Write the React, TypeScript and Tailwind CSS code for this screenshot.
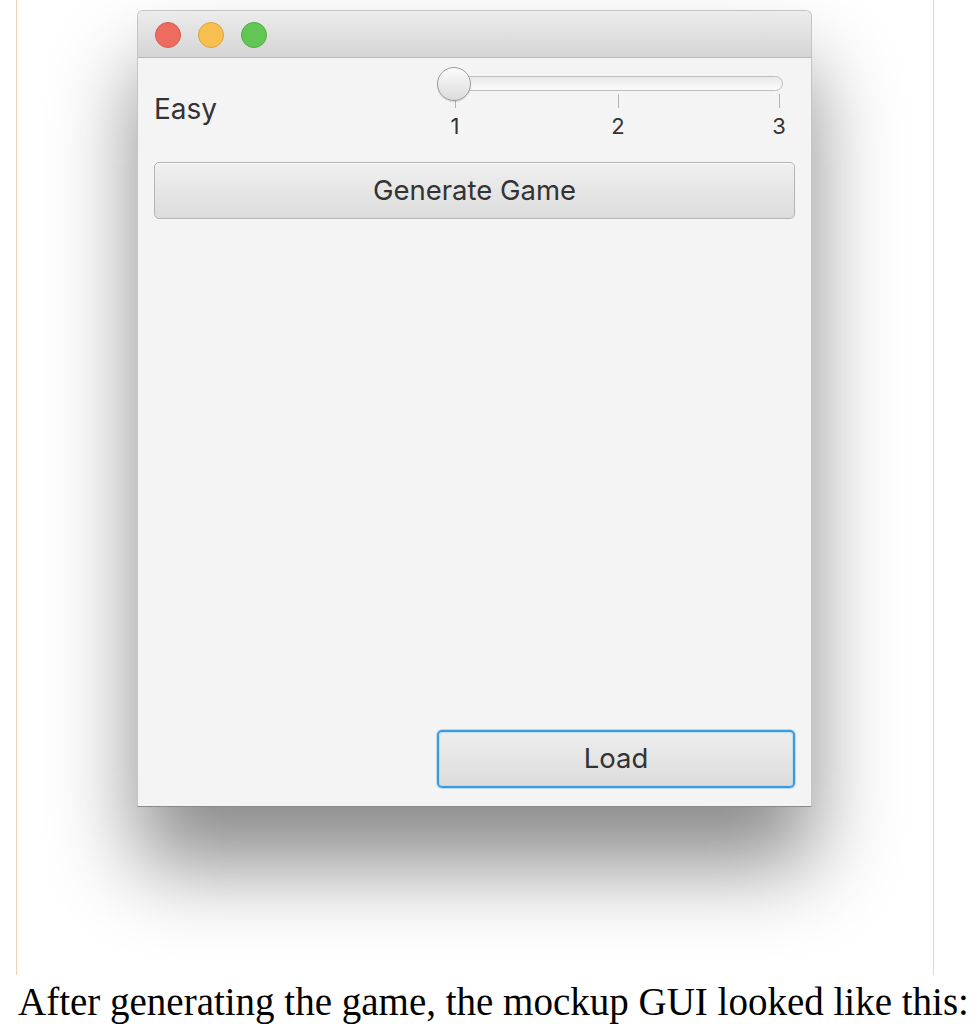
import React from "react";

const ticks = [
  { left: "left-[18px]", label: "1" },
  { left: "left-[181px]", label: "2" },
  { left: "left-[342px]", label: "3" },
];

function TrafficLights() {
  return (
    <div className="flex items-center gap-[17px] pl-[17px] pt-[11px]">
      <span className="w-[26px] h-[26px] rounded-full bg-[#ee6b5f] border border-[#d9594e]" />
      <span className="w-[26px] h-[26px] rounded-full bg-[#f6bf4f] border border-[#dca33c]" />
      <span className="w-[26px] h-[26px] rounded-full bg-[#62c655] border border-[#4eaa40]" />
    </div>
  );
}

function DifficultySlider() {
  return (
    <div className="relative w-[346px] h-[72px]">
      {/* track */}
      <div className="absolute left-[10px] right-0 top-[9px] h-[15px] rounded-full border border-[#bdbdbd] bg-gradient-to-b from-[#e9e9e9] to-[#fbfbfb]" />
      {/* ticks + labels */}
      {ticks.map((t) => (
        <React.Fragment key={t.label}>
          <div className={`absolute ${t.left} top-[27px] w-px h-[14px] bg-[#b3b3b3]`} />
          <div className={`absolute ${t.left} top-[46px] w-0 flex justify-center`}>
            <span className="text-[22px] leading-[26px] text-[#333]">{t.label}</span>
          </div>
        </React.Fragment>
      ))}
      {/* thumb */}
      <div className="absolute left-0 top-0 w-[34px] h-[34px] rounded-full border border-[#9c9c9c] bg-gradient-to-b from-[#fbfbfb] to-[#dcdcdc] shadow-[0_1px_1px_rgba(0,0,0,0.15)]" />
    </div>
  );
}

export default function App() {
  return (
    <div className="w-[979px] h-[1024px] bg-white overflow-hidden" style={{ fontFamily: "Inter, 'Noto Sans', sans-serif" }}>
      <div className="ml-[16px] w-[918px] h-[975px] border-l border-r border-[#f4d0b4] pt-[10px] pl-[120px]">
        {/* Window */}
        <div className="w-[675px] h-[797px] flex flex-col rounded-t-[6px] border border-[#c4c4c4] border-b-[#8a8a8a] bg-[#f4f4f4] shadow-[0_58px_86px_rgba(0,0,0,0.46)]">
          <div className="h-[47px] shrink-0 rounded-t-[6px] border-b border-[#b7b7b7] bg-gradient-to-b from-[#ececec] to-[#d5d5d5]">
            <TrafficLights />
          </div>

          <div className="flex-1 flex flex-col px-[16px] pt-[9px] pb-[18px]">
            <div className="flex items-start">
              <div className="w-[283px] mt-[25px] text-[28px] leading-[34px] text-[#333]">Easy</div>
              <DifficultySlider />
            </div>

            <button className="mt-[23px] h-[57px] w-full rounded-[5px] border border-[#b4b4b4] bg-gradient-to-b from-[#f0f0f0] to-[#dcdcdc] text-[27.5px] text-[#333] shadow-[inset_0_1px_0_rgba(255,255,255,0.8)]">
              Generate Game
            </button>

            <div className="flex-1" />

            <div className="flex justify-end">
              <button className="h-[58px] w-[358px] rounded-[5px] border-2 border-[#3c9be0] bg-gradient-to-b from-[#eeeeee] to-[#dcdcdc] text-[27.5px] text-[#333] shadow-[0_0_0_1px_rgba(60,155,224,0.3),inset_0_0_0_1px_rgba(180,215,240,0.7)]">
                Load
              </button>
            </div>
          </div>
        </div>
      </div>

      <p className="mt-[5px] pl-[18px] text-[39px] leading-[44px] text-black whitespace-nowrap" style={{ fontFamily: "'Liberation Serif', 'Times New Roman', serif" }}>
        After generating the game, the mockup GUI looked like this:
      </p>
    </div>
  );
}
